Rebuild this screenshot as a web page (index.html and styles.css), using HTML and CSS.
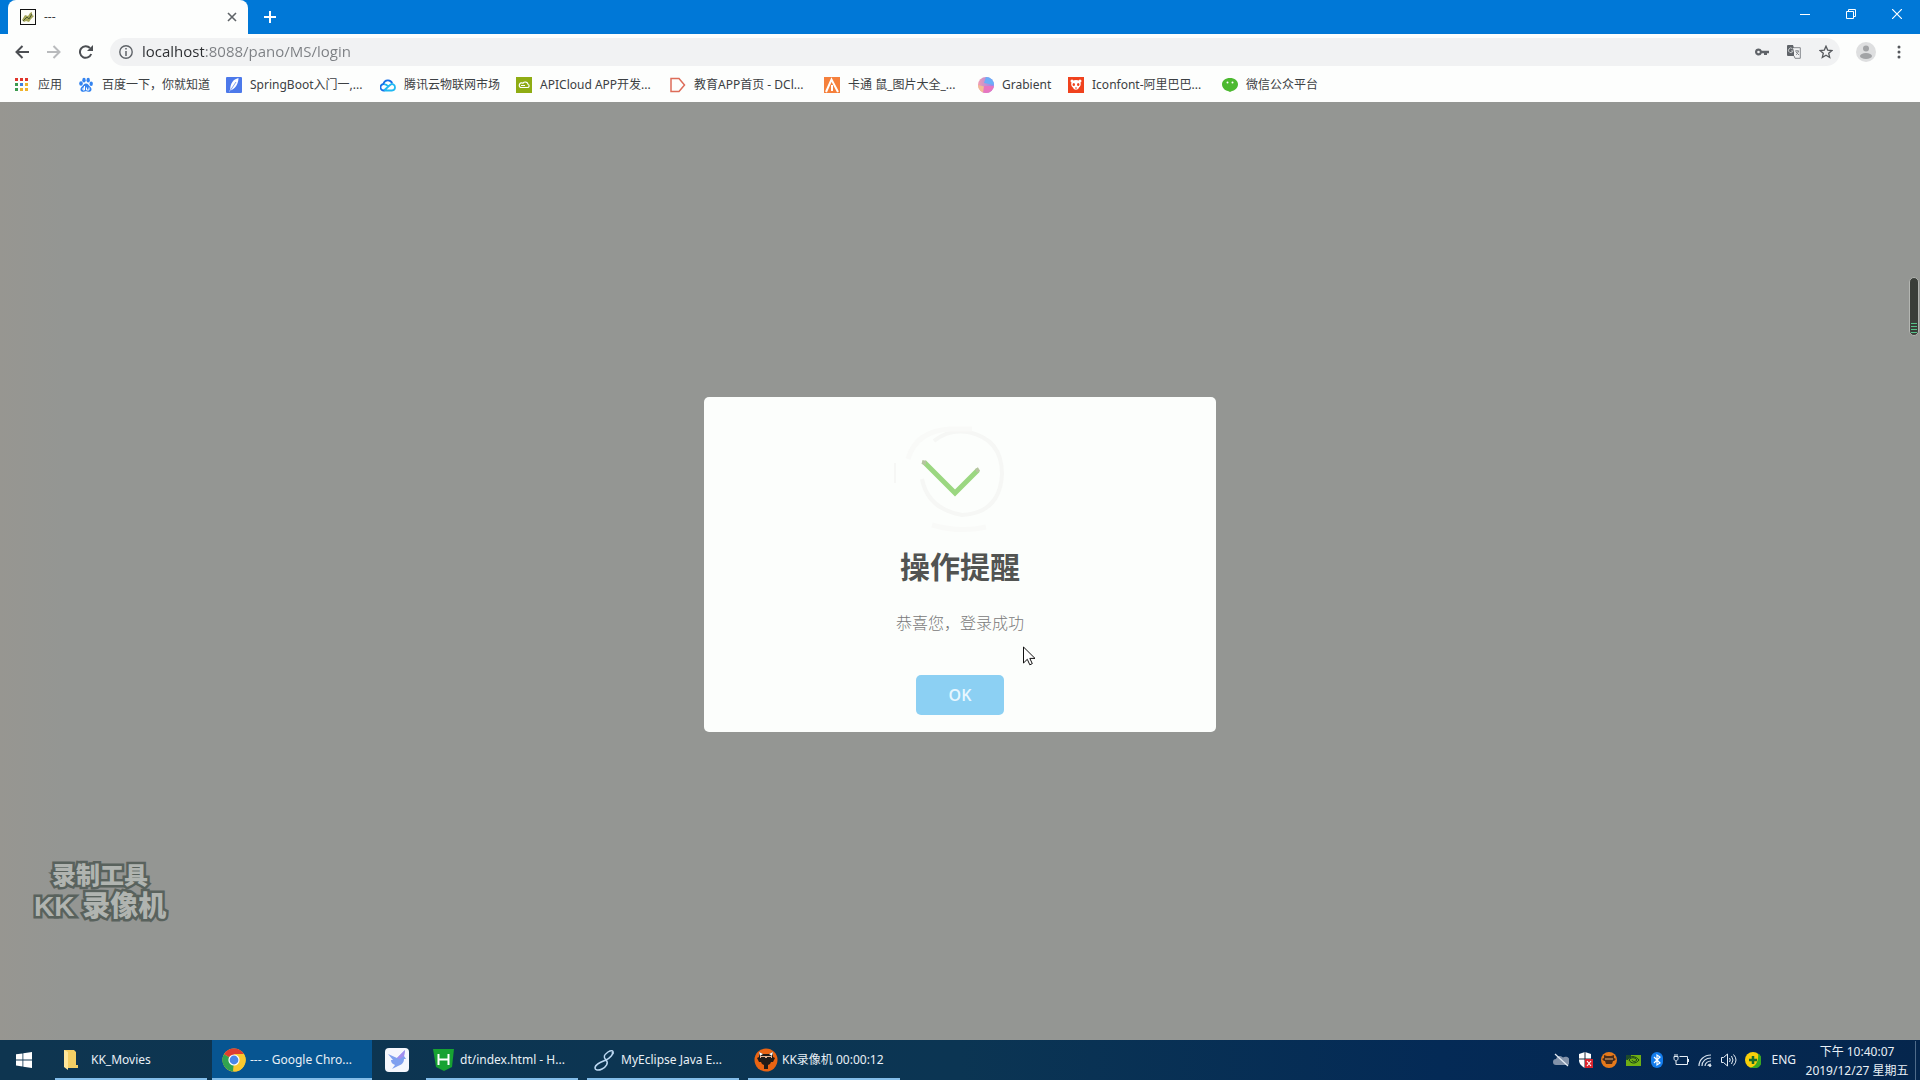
FILE: index.html
```html
<!DOCTYPE html>
<html lang="zh-CN">
<head>
<meta charset="utf-8">
<title>---</title>
<link rel="stylesheet" href="styles.css">
</head>
<body>
<header class="browser">
  <div class="tabstrip">
    <div class="tab">
      <svg class="icon16" viewBox="0 0 16 16"><rect x=".5" y=".5" width="15" height="15" fill="#fdfdf8" stroke="#111"/><path d="M2 11l3-5 3 1 2-3 2-1v3l2 1-3 3-2 3-3-1-2 1z" fill="#a5a65a"/><path d="M3 12l4-4 2 2 3-5" stroke="#4d5b33" fill="none"/></svg>
      <span class="tab-title">---</span>
      <button class="plain tab-close" aria-label="关闭标签页"><svg width="10" height="10" viewBox="0 0 10 10"><path d="M1 1l8 8M9 1l-8 8" stroke="#5f6368" stroke-width="1.6"/></svg></button>
    </div>
    <button class="plain new-tab" aria-label="新标签页"><svg width="12" height="12" viewBox="0 0 12 12"><path d="M6 0v12M0 6h12" stroke="#fff" stroke-width="2"/></svg></button>
    <div class="window-controls">
      <button class="plain" aria-label="最小化"><svg width="10" height="10" viewBox="0 0 10 10"><path d="M0 5.500h10" stroke="#fff"/></svg></button>
      <button class="plain" aria-label="还原"><svg width="10" height="10" viewBox="0 0 10 10" fill="none" stroke="#fff"><path d="M.5 2.500h7v7h-7zM2.500 2.500v-2h7v7h-2"/></svg></button>
      <button class="plain" aria-label="关闭"><svg width="10" height="10" viewBox="0 0 10 10"><path d="M0 0l10 10M10 0L0 10" stroke="#fff" stroke-width="1.200"/></svg></button>
    </div>
  </div>
  <div class="toolbar">
    <div class="nav">
      <button class="plain" aria-label="后退"><svg width="14" height="14" viewBox="0 0 14 14" fill="none" stroke="#4c4f53" stroke-width="2"><path d="M14 7H1.500M7.500 1L1.500 7l6 6"/></svg></button>
      <button class="plain" aria-label="前进"><svg width="14" height="14" viewBox="0 0 14 14" fill="none" stroke="#b9bbbd" stroke-width="2"><path d="M0 7h12.500M6.500 1l6 6-6 6"/></svg></button>
      <button class="plain" aria-label="重新加载"><svg width="14" height="14" viewBox="0 0 14 14"><path d="M12.200 9A5.800 5.800 0 1 1 11 3" fill="none" stroke="#4c4f53" stroke-width="2"/><path d="M14 0v6H8z" fill="#4c4f53"/></svg></button>
    </div>
    <div class="omnibox">
      <svg width="14" height="14" viewBox="0 0 14 14"><circle cx="7" cy="7" r="6.200" fill="none" stroke="#5f6368" stroke-width="1.400"/><path d="M7 6v5M7 3v1.600" stroke="#5f6368" stroke-width="1.500"/></svg>
      <input class="url" type="text" aria-label="地址" value="localhost:8088/pano/MS/login">
      <svg width="14" height="14" viewBox="0 0 14 14"><path fill="#5f6368" fill-rule="evenodd" d="M3.500 3.500a3.500 3.500 0 1 0 3.300 4.700H9V10h3V8.200h2V5.800H6.800A3.500 3.500 0 0 0 3.500 3.500zm0 2.200a1.300 1.300 0 1 1 0 2.600 1.300 1.300 0 0 1 0-2.600z"/></svg>
      <svg width="14" height="14" viewBox="0 0 14 14"><path d="M1 0h5l1 3h-1l2 8H1a1 1 0 0 1-1-1V1a1 1 0 0 1 1-1z" fill="#5f6368"/><path d="M7 2.700h6.300v10.600H8l-1-2.500" fill="#f1f2f3" stroke="#85888c"/><path d="M5.500 3.800A2.300 2.300 0 1 0 6 6H4" fill="none" stroke="#c5c7c9"/><path d="M8 6h4M10 5v1M11.500 6c-.5 2-1.500 3-2.500 4M9 7l3 3" fill="none" stroke="#85888c"/></svg>
      <svg width="14" height="14" viewBox="0 0 14 14"><path d="M7 1.200l1.700 3.900 4.200.4-3.200 2.800 1 4.200L7 10.300l-3.700 2.200 1-4.200L1.100 5.500l4.200-.4z" fill="none" stroke="#55585c" stroke-width="1.300"/></svg>
    </div>
    <button class="plain avatar" aria-label="用户"><svg width="20" height="20" viewBox="0 0 20 20"><circle cx="10" cy="10" r="10" fill="#dedfe0"/><circle cx="10" cy="6.500" r="3" fill="#a2a4a6"/><ellipse cx="10" cy="14" rx="6" ry="3" fill="#a2a4a6"/></svg></button>
    <button class="plain menu" aria-label="菜单"><svg width="4" height="14" viewBox="0 0 4 14" fill="#55585c"><circle cx="2" cy="2" r="1.500"/><circle cx="2" cy="7" r="1.500"/><circle cx="2" cy="12" r="1.500"/></svg></button>
  </div>
  <nav class="bookmarks">
    <a href="#"><svg class="icon16" viewBox="0 0 16 16"><path fill="#e0352b" d="M1 1h3v3H1zM6 1h3v3H6zM11 1h3v3h-3z"/><path fill="#3c9b4f" d="M1 6h3v3H1zM1 11h3v3H1z"/><path fill="#3f7fe0" d="M6 6h3v3H6z"/><path fill="#f0b32c" d="M11 6h3v3h-3zM6 11h3v3H6zM11 11h3v3h-3z"/></svg><span>应用</span></a>
    <a href="#"><svg class="icon16" viewBox="0 0 16 16" fill="#3484f0"><ellipse cx="3" cy="6.500" rx="1.800" ry="2.300"/><ellipse cx="6" cy="3.200" rx="1.700" ry="2.400"/><ellipse cx="10.200" cy="3.200" rx="1.700" ry="2.400"/><ellipse cx="13.200" cy="6.800" rx="1.700" ry="2.200"/><path d="M8 6.500c2 0 3 2.200 4.500 3.500 1.700 1.600 1.300 4.800-1.500 4.800-1.500 0-2-.5-3-.5s-1.500.5-3 .5c-2.800 0-3.200-3.200-1.500-4.800C5 8.700 6 6.500 8 6.500z"/><path d="M6.500 9v4H5v-2h1.500M8.500 10.500V13H11v-2.500" fill="none" stroke="#fff"/></svg><span>百度一下，你就知道</span></a>
    <a href="#"><svg class="icon16" viewBox="0 0 16 16"><rect width="16" height="16" rx="1" fill="#4c79ea"/><path d="M12.500 1C7 2.500 4.500 6 4.200 12.500L3 15l1.500-1.500C9 12 12.500 7 12.500 1z" fill="#fff"/><path d="M4 14l6-9" stroke="#4c79ea" stroke-width=".7"/></svg><span class="long">SpringBoot入门一,...</span></a>
    <a href="#"><svg class="icon16" viewBox="0 0 16 16" fill="none" stroke-width="1.800"><path d="M5 13.500H4A3.200 3.200 0 0 1 3.500 7 4.500 4.500 0 0 1 12.200 6.500" stroke="#1570e8"/><path d="M4 13.500l6-5.500c2-2 5-.5 5 2.300 0 2-1.200 3.200-3 3.200H5M4 7.500c2-.5 3 .5 4 1.800" stroke="#1fb8f2"/></svg><span>腾讯云物联网市场</span></a>
    <a href="#"><svg class="icon16" viewBox="0 0 16 16"><path fill="#8fac13" d="M0 0h16v16H0z"/><path d="M4.500 10.500h7a1.700 1.700 0 0 0 .5-3.300 2.800 2.800 0 0 0-5-1A2.200 2.200 0 1 0 4.500 10.500zM5 8.500h4" fill="none" stroke="#fff" stroke-width="1.200"/></svg><span class="long">APICloud APP开发...</span></a>
    <a href="#"><svg class="icon16" viewBox="0 0 16 16"><path d="M1 1.500h8L14.500 8 9 14.500H1z" fill="none" stroke="#dd6c59" stroke-width="1.500"/></svg><span class="long">教育APP首页 - DCl...</span></a>
    <a href="#"><svg class="icon16" viewBox="0 0 16 16"><path fill="#f5803c" d="M0 0h16v16H0z"/><path d="M2 15L7.500 2.500 14 15M8 8v6" fill="none" stroke="#fff" stroke-width="2"/></svg><span class="long">卡通 鼠_图片大全_...</span></a>
    <a href="#"><svg class="icon16" viewBox="0 0 16 16"><defs><clipPath id="disc"><circle cx="8" cy="8" r="8"/></clipPath><linearGradient id="dusk" x2="1"><stop stop-color="#f39bb0"/><stop offset="1" stop-color="#8f86f2"/></linearGradient></defs><g clip-path="url(#disc)"><path fill="url(#dusk)" d="M0 0h16v16H0z"/><path d="M8 0h8v8L6 6z" fill="#6aaef8"/><path d="M0 8l8 2-3 6H0z" fill="#f2bc94"/><path d="M6 9h10v7H5z" fill="#e776c0"/></g></svg><span class="mid">Grabient</span></a>
    <a href="#"><svg class="icon16" viewBox="0 0 16 16"><path fill="#f0421d" d="M0 0h16v16H0z"/><circle cx="4" cy="4" r="1.500" fill="#fff"/><circle cx="12" cy="4" r="1.500" fill="#fff"/><path d="M8 3c6 0 5.500 6 3 7.500-1 3-5 3-6 0C2.500 9 2 3 8 3z" fill="#fff"/><ellipse cx="5.800" cy="7.500" rx="1.200" ry="1.500" fill="#f0421d"/><ellipse cx="10.200" cy="7.500" rx="1.200" ry="1.500" fill="#f0421d"/><path d="M7 11h2" stroke="#f0421d"/></svg><span class="long">Iconfont-阿里巴巴...</span></a>
    <a href="#"><svg class="icon16" viewBox="0 0 16 16"><path d="M8 1c4.500 0 8 2.600 8 6.200 0 3.500-3 6.300-6 6.800l-2 1-2-1C3 13.500 0 10.800 0 7.200 0 3.600 3.500 1 8 1z" fill="#4cb930"/><circle cx="5.500" cy="5.500" r="1" fill="#fff"/><circle cx="10.500" cy="5.500" r="1" fill="#fff"/></svg><span>微信公众平台</span></a>
  </nav>
</header>

<main class="page">
  <section class="dialog" role="dialog" aria-labelledby="dialog-title">
    <svg class="status" width="140" height="120" viewBox="0 0 140 120" fill="none">
      <g stroke="#f6f7f5" stroke-width="4"><path d="M44 24Q58 12 78 15 112 22 112 57 110 96 72 98 38 92 32 62"/><path d="M18 42Q26 14 60 12h22M42 108Q70 116 96 110" stroke="#f9faf8" stroke-width="5"/><path d="M5 46v20" stroke-width="2"/></g>
      <path d="M34 45l31 31 23-23" stroke="#9bd781" stroke-width="5"/>
      <path d="M32 45l4 1M86 54l3-2" stroke="#b5c59f" stroke-width="4"/>
    </svg>
    <h1 id="dialog-title">操作提醒</h1>
    <p>恭喜您，登录成功</p>
    <button class="ok">OK</button>
  </section>
  <div class="watermark"><span>录制工具</span><span class="brand">KK 录像机</span></div>
  <div class="meter"><i></i><i></i><i></i><i></i></div>
  <svg class="cursor" width="13" height="20" viewBox="0 0 13 20"><path d="M.5 1v16l3.800-3.700 2.500 5.500 2.500-1.200-2.500-5.200h5.200z" fill="#fff" stroke="#111"/></svg>
</main>

<footer class="taskbar">
  <button class="plain start" aria-label="开始"><svg class="icon16" viewBox="0 0 16 16" fill="#fff"><path d="M0 2.300l6.500-.9v6.100H0zM7.300 1.300L16 0v7.500H7.300zM0 8.400h6.500v6.100L0 13.600zM7.300 8.400H16V16l-8.700-1.300z"/></svg></button>
  <button class="task"><svg width="24" height="24" viewBox="0 0 24 24"><path d="M1 2h10l2 2v13h2v3H3v-1H1z" fill="#f4cf65"/><path d="M1 2l4 2v18l-4-3z" fill="#ffe79b"/></svg><span>KK_Movies</span></button>
  <button class="task active"><svg width="24" height="24" viewBox="0 0 24 24"><circle cx="12" cy="12" r="11.500" fill="#fbc92f"/><path d="M12 12L2 6.200a11.500 11.500 0 0 1 20 0z" fill="#df3e30"/><path d="M2 6.200L12 12l-1 11.500A11.500 11.500 0 0 1 2 6.200z" fill="#31a350"/><path d="M12 6h10a11.500 11.500 0 0 1-10.500 17.500L17 14z" fill="#fbc92f"/><circle cx="12" cy="12" r="5.600" fill="#fff"/><circle cx="12" cy="12" r="4.400" fill="#4b86e8"/></svg><span>--- - Google Chro...</span></button>
  <button class="plain pinned" aria-label="迅雷"><svg width="24" height="24" viewBox="0 0 24 24"><rect width="24" height="24" rx="4" fill="#f5f7fd"/><path d="M3 6l9 4 8-8-1 6 2 3h-2c0 4-3 6-6 7l-6 3 3-4c-3-1-4-3-4-5l2 0z" fill="#7fa0ef"/><path d="M12 10l8-8-1 6-4 3z" fill="#a28df0"/></svg></button>
  <button class="task"><svg width="24" height="24" viewBox="0 0 24 24"><path d="M1 1h21l-2 18-8 4-8-4z" fill="#17a232"/><path d="M6.500 6v11M16.500 6v11M6.500 11.500h10" stroke="#fff" stroke-width="2" fill="none"/></svg><span>dt/index.html - H...</span></button>
  <button class="task"><svg width="24" height="24" viewBox="0 0 24 24"><path d="M20 6c1-4-2-4-5-2-4 3-5 5-2 8 3 3 0 7-4 9-4 2-7 1-7-1 0-4 6-6 11-8 4-2 8-6 6-8" fill="none" stroke="#bcd8f2" stroke-width="1.500"/></svg><span>MyEclipse Java E...</span></button>
  <button class="task"><svg width="24" height="24" viewBox="0 0 24 24"><circle cx="12" cy="12" r="11.500" fill="#ea6413"/><path d="M5 4l4 2h6l4-2v5l2 1-2 4h-2l-1 2-2 1v4h-4v-4l-2-1-1-2H5l-2-4 2-1z" fill="#211b18"/><path d="M6 8h12v2H6z" fill="#e9b592"/><path d="M7 9h4v1H7zM13 9h4v1h-4z" fill="#211b18"/><path d="M5 4l4 2-3 2zM19 4l-4 2 3 2z" fill="#fff"/></svg><span>KK录像机 00:00:12</span></button>

  <div class="tray">
    <svg class="icon16" viewBox="0 0 16 16"><path d="M3 13a3 3 0 0 1 0-6 4 4 0 0 1 7-1.500A4 4 0 0 1 15 13z" fill="#8292a9"/><path d="M2 2l13 12" stroke="#e6edf5" stroke-width="1.200"/></svg>
    <svg class="icon16" viewBox="0 0 16 16"><path d="M8 0l6 2v6c0 4-3 6.500-6 8-3-1.500-6-4-6-8V2z" fill="#fff"/><path d="M8 0v16M2 7h12" stroke="#202b3c"/><path d="M8 7h8v9H8z" fill="#d9232d"/><path d="M10 9l4 5M14 9l-4 5" stroke="#fff" stroke-width="1.200"/></svg>
    <svg class="icon16" viewBox="0 0 16 16"><circle cx="8" cy="8" r="8" fill="#e5791b"/><path d="M3 3l3 1h4l3-1v3l2 1-2 2h-1l-1 3H5L4 9H3L1 7l2-1z" fill="#4a2d1a"/><path d="M4 7h8" stroke="#efb071"/></svg>
    <svg class="icon16" viewBox="0 0 16 16"><path d="M1 3h15v11H1z" fill="#6fae14"/><path d="M2 8c3-5 9-4 12 0-3 4-8 4-10 0 2-3 6-3 8 0-2 2-4 2-5 0" stroke="#173d19" fill="none"/><path d="M1 3h5v3L1 8z" fill="#1d4a2c"/></svg>
    <svg class="icon16" viewBox="0 0 16 16"><rect x="2" width="12" height="16" rx="6" fill="#137cec"/><path d="M5 5l6 6-3 2V3l3 2-6 6" fill="none" stroke="#fff" stroke-width="1.200"/></svg>
    <svg class="icon16" viewBox="0 0 16 16" fill="none" stroke="#e5edf5"><path d="M6.500 4.500h8v8h-9M15.500 7v3M1 4.500h4v2c0 3-4 3-4 0zM2 2v2M4 2v2M3 9v3.500h3"/></svg>
    <svg class="icon16" viewBox="0 0 16 16" fill="none" stroke="#d5e0ec"><path d="M2 14C2 8 7 3 14 3M5 14c0-5 4-8 9-8M8 14c0-3 3-5 6-5M11 14c0-1 1-2 3-2" stroke-width="1.200"/><circle cx="13" cy="13.500" r="1" fill="#fff"/></svg>
    <svg class="icon16" viewBox="0 0 16 16" fill="none" stroke="#e5edf5"><path d="M.5 5.500h2l4-3.500v12l-4-3.500h-2zM8.500 6q1.500 2 0 4M10.500 4q3 4 0 8M12.500 2.500q5 5.500 0 11"/></svg>
    <svg class="icon16" viewBox="0 0 16 16"><circle cx="8" cy="8" r="8" fill="#f8cf0a"/><path d="M13 1.500A8 8 0 0 1 5 15.500C11 15 14 8 13 1.500z" fill="#38a822"/><path d="M8 4v8M4 8h8" stroke="#176b29" stroke-width="2.500"/></svg>
    <span class="lang">ENG</span>
    <div class="clock"><span>下午 10:40:07</span><span>2019/12/27 星期五</span></div>
  </div>
</footer>
</body>
</html>
```
FILE: styles.css
```css
* { box-sizing: border-box; }

body {
  margin: 0;
  min-height: 100vh;
  display: flex;
  flex-direction: column;
  font: 12px/16px "Noto Sans", "Noto Sans CJK SC", sans-serif;
  color: #3c4043;
}

svg { display: block; flex: none; }
.icon16 { width: 16px; height: 16px; }

.plain {
  display: flex;
  align-items: center;
  justify-content: center;
  padding: 0;
  border: 0;
  background: none;
}

/* Browser chrome */
.browser { background: #fdfefd; }

.tabstrip {
  display: flex;
  height: 34px;
  padding-left: 8px;
  background: #0078d7;
}
.tab {
  display: flex;
  align-items: center;
  gap: 8px;
  width: 240px;
  padding: 0 11px 0 12px;
  border-radius: 8px 8px 0 0;
  background: #fdfefd;
}
.tab-title { flex: 1; }
.new-tab { width: 44px; }
.window-controls {
  display: flex;
  align-items: flex-start;
  margin-left: auto;
}
.window-controls button { width: 46px; height: 28px; }

.toolbar {
  display: flex;
  align-items: center;
  height: 36px;
  padding: 0 19px 0 15px;
}
.nav { display: flex; gap: 18px; width: 95px; }
.omnibox {
  flex: 1;
  display: flex;
  align-items: center;
  gap: 18px;
  height: 28px;
  padding: 0 7px 0 9px;
  border-radius: 14px;
  background: #f1f2f3;
}
.url {
  flex: 1;
  min-width: 0;
  margin-left: -9px;
  padding: 0 0 2px;
  border: 0;
  font: 15px/20px "Open Sans", sans-serif;
  color: transparent;
  background: linear-gradient(to right, #2b2d30 62px, #7b7e82 62px);
  -webkit-background-clip: text;
  background-clip: text;
}
.avatar { margin: 0 21px 0 16px; }

.bookmarks {
  display: flex;
  align-items: center;
  gap: 16px;
  height: 32px;
  padding: 0 14px 3px;
  white-space: nowrap;
}
.bookmarks a {
  display: flex;
  align-items: center;
  gap: 8px;
  color: #3c4043;
  text-decoration: none;
}
.long { width: 114px; }
.mid { width: 50px; }

/* Page behind the overlay */
.page {
  position: relative;
  flex: 1;
  display: flex;
  align-items: center;
  justify-content: center;
  padding-bottom: 14px;
  background: linear-gradient(to right, #979691, #949693 64px);
}

.dialog {
  display: flex;
  flex-direction: column;
  align-items: center;
  width: 512px;
  padding: 20px 16px 17px;
  border-radius: 5px;
  background: #fcfefc;
  text-align: center;
}
.dialog h1 {
  margin: 10px 0 24px;
  font-size: 30px;
  line-height: 40px;
  font-weight: 700;
  color: #525452;
}
.dialog p {
  margin: 0 0 40px;
  font-size: 16px;
  line-height: 24px;
  font-weight: 300;
  color: #797979;
}
.ok {
  width: 88px;
  height: 40px;
  border: 0;
  border-radius: 5px;
  background: #8cd0f3;
  color: #e8f7ff;
  font: 600 16px/24px "Open Sans", sans-serif;
}

.watermark {
  position: absolute;
  left: 34px;
  bottom: 117px;
  display: flex;
  flex-direction: column;
  align-items: center;
  font: 900 24px/30px "Liberation Sans", "Noto Sans CJK SC", sans-serif;
  color: #b0b4b0;
  -webkit-text-stroke: 5px #59625d;
  paint-order: stroke fill;
}
.watermark .brand {
  font-size: 28px;
  line-height: 32px;
}

.meter {
  position: absolute;
  right: 1px;
  top: 175px;
  display: flex;
  flex-direction: column;
  justify-content: flex-end;
  gap: 2px;
  width: 10px;
  height: 59px;
  padding: 2px 1px;
  border: 1px solid #b4b6b2;
  border-radius: 5px;
  background: #3a3e39;
}
.meter i { height: 1px; background: #57c28a; }

.cursor {
  position: absolute;
  left: calc(50% + 63px);
  top: calc(50% + 75px);
}

/* Taskbar */
.taskbar {
  display: flex;
  align-items: stretch;
  height: 40px;
  background: linear-gradient(to right, #0e3550, #0b3553 50%, #042a56 75%, #05264d);
  color: #e9f0f6;
}
.start { width: 48px; margin-right: 7px; }
.task {
  display: flex;
  align-items: center;
  gap: 4px;
  width: 152px;
  margin-right: 9px;
  padding: 2px 6px 0;
  border: 0;
  border-bottom: 2px solid #83bde9;
  background: none;
  color: inherit;
  font: inherit;
  white-space: nowrap;
}
.task:nth-child(2) { padding-left: 8px; margin-right: 5px; }
.active {
  width: 160px;
  margin-right: 0;
  padding-left: 10px;
  background: #075591;
}
.pinned { width: 50px; margin-right: 4px; }

.tray {
  display: flex;
  align-items: center;
  gap: 8px;
  margin-left: auto;
  padding-right: 4px;
}
.lang { margin-left: 2px; }
.clock {
  display: flex;
  flex-direction: column;
  align-items: center;
  width: 112px;
  padding: 1px 5px 0 0;
  border-right: 1px solid #4f6b8a;
  line-height: 19px;
  white-space: nowrap;
}
```
